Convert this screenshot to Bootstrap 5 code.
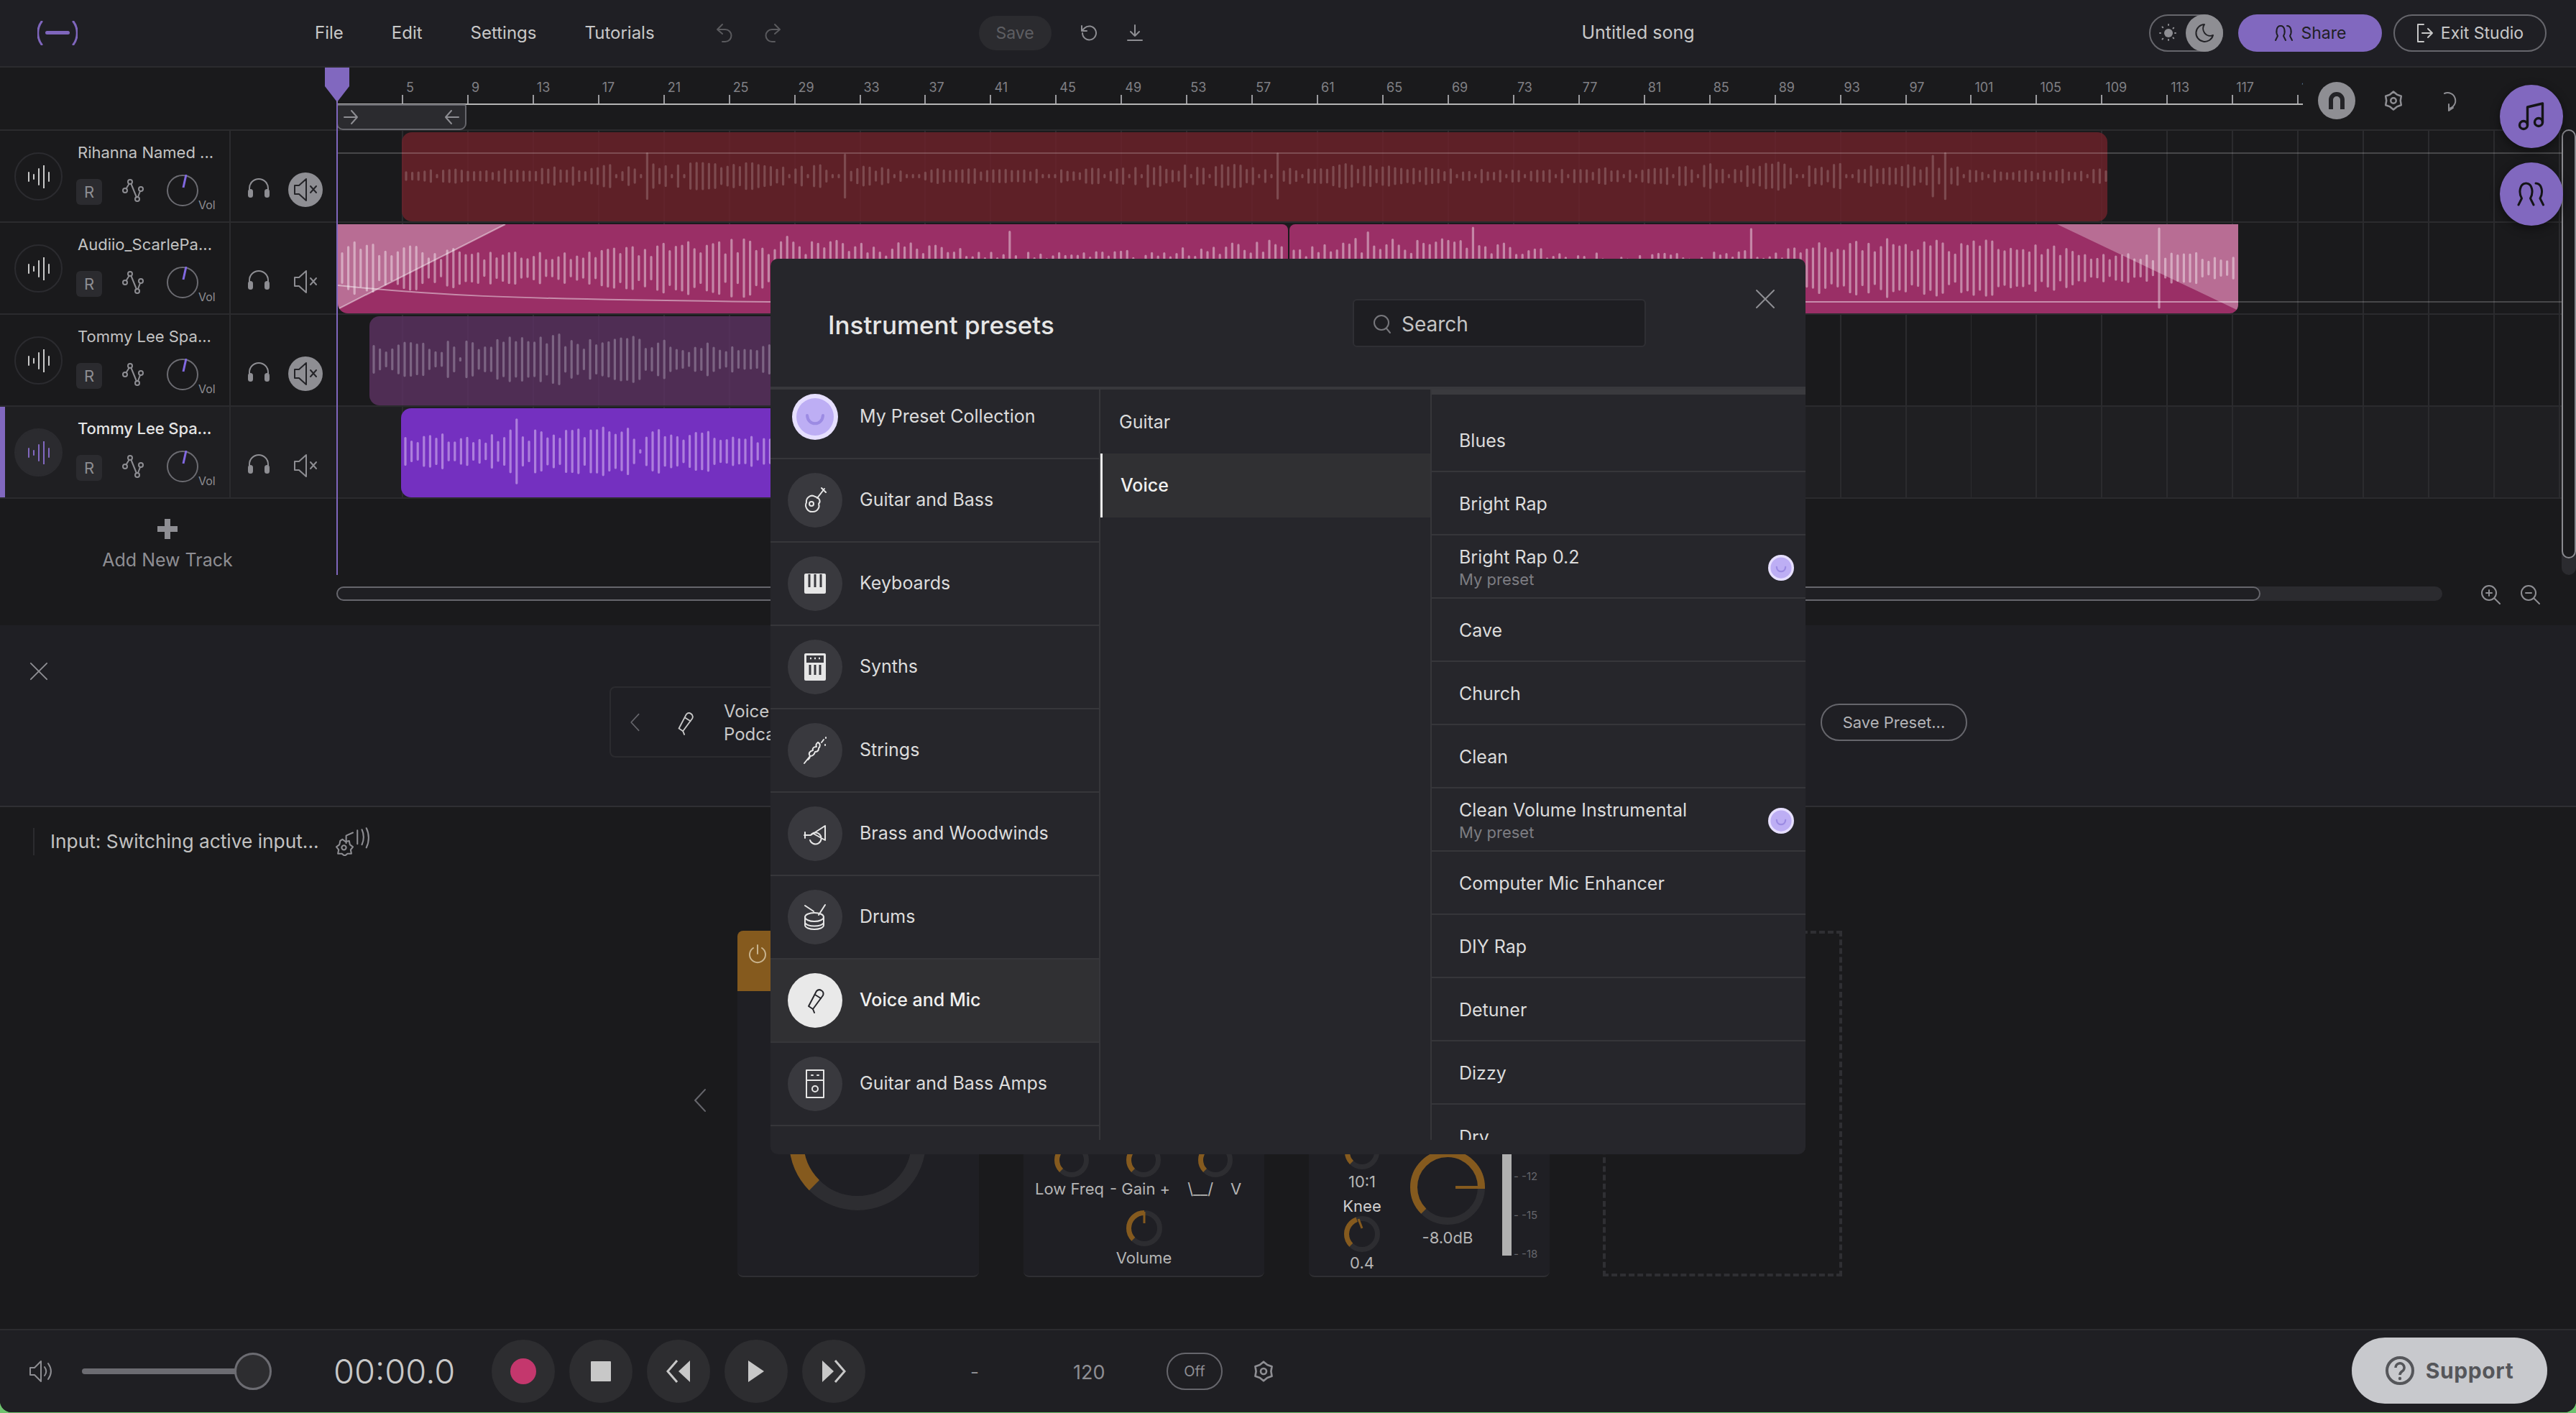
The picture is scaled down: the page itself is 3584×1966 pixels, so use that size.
<!DOCTYPE html>
<html lang="en">
<head>
<meta charset="UTF-8">
<title>Studio</title>
<link rel="stylesheet" href="https://cdn.jsdelivr.net/npm/bootstrap@5.3.0/dist/css/bootstrap.min.css">
<script src="https://cdn.jsdelivr.net/npm/bootstrap@5.3.0/dist/js/bootstrap.bundle.min.js"></script>
<style>
    html, body { margin: 0; width: 3584px; height: 1966px; overflow: hidden; background: #6fc36f; }
    body { font-family: Inter, "Noto Sans", sans-serif; color: #c8c8c8; }
    svg { display: block; flex: none; }
    .ln { fill: none; stroke: currentColor; stroke-width: 2; stroke-linecap: round; stroke-linejoin: round; }
    .svg-sprite { position: absolute; }

    .studio { width: 3584px; height: 1965px; position: relative; overflow: hidden; background: #1a1a1c; border-radius: 0 0 16px 16px; }

    /* top bar */
    .top-bar { height: 94px; background: #1f1f24; border-bottom: 2px solid #2b2b2e; padding: 0; flex-wrap: nowrap; justify-content: flex-start; }
    .bar-left { width: 1640px; }
    .logo-mark { margin-left: 52px; width: 56px; height: 34px; color: #7f66bd; }
    .menu-row { margin-left: 330px; gap: 67px; font-size: 24px; color: #c8c8c8; }
    .history-row { margin-left: 83px; gap: 39px; color: #5a5a5e; }
    .save-btn { margin-left: 273px; width: 101px; height: 48px; background: #2b2b2f; border: 0; border-radius: 24px; padding: 0; font-size: 23px; color: #5e5e62; }
    .bar-ic { color: #8e8e93; }
    .reload-ic { margin-left: 38px; }
    .download-ic { margin-left: 36px; }
    .song-title { flex: 0 0 1278px; text-align: center; font-size: 25px; color: #c8c8c8; }
    .bar-right { margin-left: 72px; }
    .theme-pill { width: 103px; height: 52px; border: 2px solid #66666c; border-radius: 26px; padding-left: 12px; color: #8e8e93; position: relative; }
    .theme-knob { position: absolute; right: -2px; top: -2px; width: 52px; height: 52px; border-radius: 50%; background: #8e8e93; color: #232327; display: flex; align-items: center; justify-content: center; }
    .share-btn, .exit-btn { height: 52px; border-radius: 26px; padding: 0; font-size: 23px; display: flex; align-items: center; justify-content: center; gap: 10px; }
    .share-btn { width: 200px; margin-left: 21px; background: #8168bf; border: 0; color: #1f1f24; }
    .exit-btn { width: 213px; margin-left: 16px; background: transparent; border: 2px solid #66666c; color: #c8c8c8; }

    /* ruler */
    .ruler-row { height: 86px; }
    .ruler-scale { margin-left: 468px; width: 2736px; height: 52px; overflow: hidden; border-bottom: 2px solid #b5b5b5; }
    .bar-cell { flex: 0 0 90.94px; height: 50px; padding: 17px 0 0 6px; font-size: 18px; line-height: 22px; color: #808085; background: linear-gradient(#9a9a9e, #9a9a9e) no-repeat left bottom / 2px 12px; }
    .ruler-tools { margin-left: 21px; margin-top: 20px; height: 52px; color: #8e8e93; }
    .gear-ic { margin: 0 48px 0 38px; }
    .magnet-chip { width: 52px; height: 52px; border-radius: 50%; background: #8e8e93; color: #232327; display: flex; align-items: center; justify-content: center; }
    .loop-box { position: absolute; left: 468px; top: 145px; width: 181px; height: 36px; background: #2b2b2f; border: 2px solid #66666c; border-radius: 3px 3px 9px 9px; padding: 0 6px; color: #8e8e93; display: flex; justify-content: space-between; align-items: center; }
    .head-mark { position: absolute; left: 452px; top: 94px; color: #8168bf; }
    .play-line { position: absolute; left: 468px; top: 142px; width: 2px; height: 658px; background: #7f66bd; z-index: 3; }

    /* tracks */
    .track-row { width: 3564px; height: 128px; border-top: 2px solid #2b2b2e; }
    .track-row.is-last { height: 130px; border-bottom: 2px solid #2b2b2e; }
    .track-row.is-active { background: #1f1f22; }
    .track-row.is-active .track-head { box-shadow: inset 7px 0 #8168bf; }
    .track-head { flex: 0 0 470px; }
    .track-info { flex: 0 0 321px; border-right: 2px solid #2b2b2e; padding: 30px 0 0 20px; }
    .wave-ring { width: 67px; height: 67px; border-radius: 50%; border: 2px solid #2b2b2f; color: #c8c8c8; display: flex; align-items: center; justify-content: center; margin-right: 21px; }
    .is-active .wave-ring { background: #2b2b2f; color: #8168bf; }
    .track-ctl { margin-top: -15px; width: 205px; }
    .track-name { font-size: 22px; line-height: 30px; color: #c2c2c2; white-space: nowrap; }
    .is-active .track-name { color: #e4e4e4; font-weight: 500; letter-spacing: -.1px; }
    .ctl-row { margin-top: 15px; height: 46px; margin-left: -2px; color: #8e8e93; }
    .rec-chip { width: 36px; height: 36px; background: #2b2b2f; border: 0; border-radius: 6px; padding: 0; font-size: 22px; color: #8e8e93; margin-top: 4px; }
    .node-ic { margin: 0 32px 0 28px; }
    .vol-tag { font-size: 16px; align-self: flex-end; line-height: 18px; color: #8e8e93; margin-bottom: -6px; }
    .track-side { padding: 58px 0 0 23px; color: #8e8e93; gap: 25px; }
    .mute-chip { width: 48px; height: 48px; border-radius: 50%; display: flex; align-items: center; justify-content: center; }
    .mute-chip.is-on { background: #8e8e93; color: #232327; }
    .track-lane { flex: 1 1 auto; position: relative; background: repeating-linear-gradient(90deg, transparent 0, transparent 88.94px, #2b2b2e 88.94px, #2b2b2e 90.94px); }
    .clip { position: absolute; top: 2px; height: 124px; border-radius: 14px; overflow: hidden; }
    .clip-red { left: 89px; width: 2373px; background: rgba(111, 34, 42, .8); }
    .clip-pink { background: #9a2f66; }
    .clip-pink.a { left: 0; width: 1322px; border-radius: 0 8px 8px 14px; }
    .clip-pink.b { left: 1324px; width: 1320px; border-radius: 8px 0 12px 8px; }
    .clip-dim { left: 44px; width: 1300px; background: rgba(92, 50, 99, .8); }
    .clip-live { left: 88px; width: 1300px; background: #7430c0; }
    .clip svg { position: absolute; left: 0; top: 0; }
    .gain-line { position: absolute; height: 2px; background: rgba(255, 255, 255, .2); }
    .gain-top { left: 0; top: 30px; width: 3095px; }
    .gain-tail { left: 2644px; top: 109px; width: 451px; }

    .add-zone { height: 176px; }
    .add-track { flex: 0 0 470px; height: 176px; padding: 28px 4px 0 0; color: #8e8e93; font-size: 25px; line-height: 34px; text-align: center; }
    .add-track svg { margin: 0 auto 12px; }
    .hscroll { margin-top: 122px; margin-left: -2px; width: 2930px; height: 20px; background: #2b2b2f; border-radius: 10px; }
    .hscroll-thumb { width: 2677px; height: 20px; background: #1f1f23; border: 2px solid #66666c; border-radius: 10px; }
    .zoom-row { margin: 119px 0 0 53px; gap: 27px; color: #8e8e93; }

    .vscroll { position: absolute; left: 3564px; top: 180px; width: 20px; height: 620px; background: #2b2b2f; border-radius: 10px; }
    .vscroll-thumb { height: 597px; background: #1a1a1c; border: 2px solid #8a8a8f; border-radius: 10px; }
    .float-btn { position: absolute; left: 3478px; width: 88px; height: 88px; border-radius: 50%; background: #8168bf; color: #141416; display: flex; align-items: center; justify-content: center; box-shadow: 0 4px 14px rgba(0, 0, 0, .45); z-index: 4; }
    .float-note { top: 118px; }
    .float-share { top: 226px; }

    /* effect header */
    .fx-head { height: 253px; background: #1f1f24; border-bottom: 2px solid #2f2f33; }
    .fx-close { margin: 51px 0 0 41px; color: #8e8e93; }
    .preset-box { margin: 85px 0 0 781px; width: 1500px; height: 99px; border: 2px solid #2b2b2f; border-radius: 8px; padding: 3px 0 0 24px; }
    .preset-chev { color: #66666c; margin: -3px 46px 0 0; }
    .preset-text { margin-left: 39px; font-size: 24px; line-height: 32px; color: #c8c8c8; }
    .save-preset { margin: 109px 0 0 185px; width: 204px; height: 52px; background: transparent; border: 2px solid #66666c; border-radius: 26px; padding: 0; font-size: 22px; color: #b4b4b8; }

    /* rack */
    .fx-rack { height: 726px; padding: 29px 0 0 46px; }
    .rack-status { height: 38px; border-left: 2px solid #2b2b2f; padding-left: 22px; font-size: 26.3px; color: #c2c2c2; gap: 22px; }
    .rack-row { margin: 105px 0 0 917px; gap: 62px; }
    .rack-chev { color: #66666c; margin: -10px -20px 0 0; align-self: center; }
    .fx-card { width: 336px; height: 482px; background: #1f1f24; border-bottom: 2px solid #2f2f33; border-radius: 8px; overflow: hidden; font-size: 22px; line-height: 26px; color: #b5b5b5; }
    .fx-card.is-mid { width: 335px; }
    .fx-card.is-comp { width: 335px; }
    .fx-band { height: 84px; background: #855a1e; padding: 18px 0 0 14px; color: #c9b48f; }
    .big-dial { margin: 115px 0 0 72px; }
    .dial-row { margin: 295px 0 0 43px; gap: 52px; }
    .dial-notes { margin: 3px 0 0 16px; white-space: nowrap; }
    .dial-vol { margin-top: 17px; }
    .note-gap { margin-top: 3px; }
    .comp-left { flex: 0 0 148px; padding-top: 284px; }
    .comp-left .gap-a { margin-top: 4px; }
    .comp-left .gap-b { margin-top: 8px; color: #d0d0d0; }
    .comp-left .gap-c { margin-top: 1px; }
    .comp-left .gap-d { margin-top: 2px; }
    .comp-mid { flex: 0 0 104px; margin-left: -7px; padding-top: 305px; }
    .comp-db { margin-top: 5px; }
    .comp-meter { margin: 205px 0 0 24px; }
    .dash-slot { width: 333px; height: 481px; border: 4px dashed #2f2f33; margin-left: 12px; }
    .meter-bar { width: 13px; height: 247px; background: #b0b0b0; }
    .meter-marks { margin-left: 3px; margin-top: 110px; font-size: 15px; line-height: 54px; color: #66666c; white-space: nowrap; }

    /* transport */
    .transport { height: 116px; background: #1f1f23; border-top: 2px solid #2b2b2e; color: #8e8e93; position: relative; padding-left: 40px; }
    .vol-slide { width: 264px; height: 52px; margin-left: 41px; position: relative; }
    .vol-slide::before { content: ""; position: absolute; left: 0; top: 22px; width: 230px; height: 8px; background: #6c6c72; border-radius: 4px; }
    .vol-thumb { position: absolute; right: 0; top: 0; width: 52px; height: 52px; border-radius: 50%; background: #2d2d30; border: 3px solid #6c6c72; }
    .clock { margin-left: 86px; width: 220px; font-size: 47px; font-weight: 300; color: #c8c8c8; line-height: 52px; }
    .deck { gap: 20px; }
    .deck-btn { width: 88px; height: 88px; border-radius: 50%; background: #2d2d30; border: 0; padding: 0; color: #c8c8c8; display: flex; align-items: center; justify-content: center; }
    .rec-dot { width: 36px; height: 36px; border-radius: 50%; background: #c4376d; }
    .stop-box { width: 28px; height: 28px; background: #c8c8c8; border-radius: 1px; }
    .beat-dash { margin-left: 146px; width: 143px; font-size: 26px; }
    .bpm-val { width: 130px; font-size: 27px; margin-top: 4px; }
    .off-pill { width: 78px; height: 52px; background: transparent; border: 2px solid #66666c; border-radius: 26px; padding: 0; font-size: 20px; color: #8e8e93; margin-right: 41px; }
    .help-btn { position: absolute; left: 3272px; top: 10px; width: 272px; height: 92px; border: 0; border-radius: 46px; background: #c8c9cd; color: #55565a; font-size: 30px; font-weight: 700; letter-spacing: .6px; display: flex; align-items: center; justify-content: center; gap: 16px; padding: 0; }

    /* preset dialog */
    .preset-modal { position: absolute; left: 1072px; top: 360px; width: 1440px; height: 1246px; background: #26262b; border-radius: 10px; z-index: 6; }
    .preset-top { height: 182px; border-bottom: 4px solid #38383c; position: relative; }
    .preset-title { position: absolute; left: 80px; top: 70px; font-size: 35px; line-height: 44px; font-weight: 500; color: #e6e6e6; }
    .search-box { position: absolute; left: 810px; top: 56px; width: 408px; height: 67px; background: #1e1e22; border: 2px solid #2f2f34; border-radius: 6px; padding: 2px 0 0 26px; gap: 14px; font-size: 28px; color: #c4c4c4; }
    .search-box svg { color: #77777c; }
    .preset-x { position: absolute; left: 1370px; top: 42px; color: #8e8e93; }
    .preset-cols { height: 1044px; overflow: hidden; }
    .col-cats { flex: 0 0 459px; border-right: 2px solid #36363a; }
    .col-kinds { flex: 0 0 459px; }
    .col-names { flex: 1 1 auto; border-left: 2px solid #36363a; }
    .preset-modal .list-group-item { background: transparent; color: #dcdcdc; border-width: 0 0 2px; border-color: #36363a; border-radius: 0; padding: 0; font-size: 25px; display: flex; align-items: center; }
    .cat-list { margin-top: -19px; }
    .cat-list .list-group-item { height: 116px; padding-left: 24px; gap: 24px; }
    .cat-list .list-group-item.is-sel { background: #303033; color: #f0f0f0; font-weight: 500; }
    .cat-chip { width: 76px; height: 76px; border-radius: 50%; background: #39393e; color: #e6e6e6; display: flex; align-items: center; justify-content: center; flex: none; }
    .cat-chip.is-mine { background: none; }
    .is-sel .cat-chip { background: #e9e9e9; color: #26262b; }
    .kind-list { margin-top: 2px; }
    .kind-list .list-group-item { height: 87px; padding-left: 26px; border-width: 0; }
    .kind-list .list-group-item.is-sel { height: 89px; background: #303033; border-left: 3px solid #eee; padding-left: 25px; color: #f0f0f0; font-weight: 500; }
    .name-cap { height: 7px; background: #3a3a3e; }
    .name-list .list-group-item { height: 88px; padding: 4px 0 0 38px; justify-content: space-between; }
    .name-list .list-group-item.is-first { margin-top: 20px; }
    .preset-sub { font-size: 22px; line-height: 30px; color: #7d7d82; }
    .preset-main { line-height: 32px; }
    .mine-badge { margin-right: 16px; }
</style>
</head>
<body>
<svg class="svg-sprite" width="0" height="0">
    <defs>
        <symbol id="i-bars" viewBox="0 0 32 32"><path class="ln" stroke-width="3" d="M2 10v12M9 13v6M16 5v22M23 0v32M30 10v12"/></symbol>
        <symbol id="i-node" viewBox="0 0 30 32"><g class="ln" stroke-width="2.6"><circle cx="11" cy="4" r="3"/><circle cx="4" cy="16" r="3"/><circle cx="26" cy="14" r="3"/><circle cx="21" cy="28" r="3"/><path d="M9.5 7 5.5 13.5M12.500 7 20 25.500M22 25 25 17"/></g></symbol>
        <symbol id="i-phones" viewBox="0 0 32 28"><path class="ln" stroke-width="3" d="M3 18v-4a13 13 0 0 1 26 0v4"/><rect x="1" y="15" width="7" height="12" rx="3.5" fill="currentColor"/><rect x="24" y="15" width="7" height="12" rx="3.5" fill="currentColor"/></symbol>
        <symbol id="i-mute" viewBox="0 0 34 36"><g class="ln" stroke-width="3"><path d="M2 12h6l10-9v30L8 24H2z"/><path d="M24 13l8 9M32 13l-8 9"/></g></symbol>
        <symbol id="i-share" viewBox="0 0 28 24"><g class="ln" stroke-width="2.2"><path d="M2 22l3-6C2 11 3 2 9 2s7 9 4 14l3 6"/><path d="M18 2c6 0 7 9 4 14l3 6"/></g></symbol>
        <symbol id="i-gear" viewBox="0 0 24 24"><g class="ln"><path d="M12 2 15.9 5.25 20.66 7 19.8 12 20.66 17 15.9 18.75 12 22 8.1 18.75 3.34 17 4.2 12 3.34 7 8.1 5.25z"/><circle cx="12" cy="12" r="3"/></g></symbol>
        <symbol id="i-mic" viewBox="0 0 32 36"><g class="ln" stroke-width="2.8"><path d="M18 5a5.500 5.500 0 0 1 9 6L13 30l-6-4z"/><path d="M16 10l8 5M13 30l2 5"/></g></symbol>
        <symbol id="i-x" viewBox="0 0 28 28"><path class="ln" d="M2 2l24 24M26 2 2 26"/></symbol>
        <symbol id="i-chev" viewBox="0 0 18 32"><path class="ln" stroke-width="2.4" d="M16 2 3 16l13 14"/></symbol>
        <symbol id="i-smile" viewBox="0 0 64 64"><circle cx="32" cy="32" r="32" fill="#e6dfff"/><circle cx="32" cy="32" r="26" fill="#bdaef4"/><path d="M21 30c1 15 21 15 22 0" fill="none" stroke="#9c8be3" stroke-width="4" stroke-linecap="round"/></symbol>
    </defs>
</svg>

<div class="studio">
    <nav class="navbar top-bar">
        <div class="bar-left d-flex align-items-center">
            <svg class="logo-mark" viewBox="0 0 56 34"><path d="M6 1C-1 10-1 24 6 33M50 1c7 9 7 23 0 32" fill="none" stroke="currentColor" stroke-width="3" stroke-linecap="round"/><rect x="11" y="14" width="34" height="5" rx="2.5" fill="currentColor"/></svg>
            <div class="menu-row d-flex">
                <span>File</span><span>Edit</span><span>Settings</span><span>Tutorials</span>
            </div>
            <div class="history-row d-flex">
                <svg width="28" height="28" viewBox="0 0 28 28"><path class="ln" d="M11 2 4 9l7 6M4 9h11a8 8 0 0 1 0 17h-4"/></svg>
                <svg width="28" height="28" viewBox="0 0 28 28"><path class="ln" d="M17 2l7 7-7 6M24 9H13a8 8 0 0 0 0 17h4"/></svg>
            </div>
            <button class="btn save-btn">Save</button>
            <svg class="bar-ic reload-ic" width="28" height="28" viewBox="0 0 28 28"><path class="ln" d="M5 14a9.5 9.5 0 1 0 3-7l-4 4M4 4v7h7"/></svg>
            <svg class="bar-ic download-ic" width="28" height="28" viewBox="0 0 28 28"><path class="ln" d="M14 3v15M8 12l6 6 6-6M4 24h20"/></svg>
        </div>
        <div class="song-title">Untitled song</div>
        <div class="bar-right d-flex align-items-center">
            <div class="theme-pill d-flex align-items-center">
                <svg width="26" height="26" viewBox="0 0 26 26"><circle cx="13" cy="13" r="6" fill="currentColor"/><path class="ln" stroke-dasharray="1 5" d="M13 1v3M13 22v3M1 13h3M22 13h3M4.5 4.5l2 2M19.5 19.5l2 2M4.5 21.5l2-2M19.5 6.5l2-2"/></svg>
                <span class="theme-knob"><svg width="30" height="30" viewBox="0 0 30 30"><path class="ln" stroke-width="2.4" d="M15 3a12 12 0 1 0 12 15A10 10 0 0 1 15 3z"/></svg></span>
            </div>
            <button class="btn share-btn"><svg width="28" height="24"><use href="#i-share"/></svg>Share</button>
            <button class="btn exit-btn"><svg width="24" height="30" viewBox="0 0 24 30"><path class="ln" d="M10 3H2v24h8M8 15h14M16 9l6 6-6 6"/></svg>Exit Studio</button>
        </div>
    </nav>

    <div class="ruler-row d-flex">
        <div class="ruler-scale d-flex" id="rulerScale"></div>
        <div class="ruler-tools d-flex align-items-center">
            <span class="magnet-chip"><svg width="26" height="28" viewBox="0 0 26 28"><path d="M2 26V13a11 11 0 0 1 22 0v13h-6V13a5 5 0 0 0-10 0v13z" fill="currentColor"/></svg></span>
            <svg class="gear-ic" width="30" height="32"><use href="#i-gear"/></svg>
            <svg width="28" height="32" viewBox="0 0 28 32"><path class="ln" d="M8 6a11 11 0 1 1 6 21M14 21v9l6-4"/></svg>
        </div>
    </div>
    <div class="loop-box">
        <svg width="24" height="24" viewBox="0 0 24 24"><path class="ln" d="M3 12h18M13 3l8 9-8 9"/></svg>
        <svg width="24" height="24" viewBox="0 0 24 24"><path class="ln" d="M21 12H3M11 3l-8 9 8 9"/></svg>
    </div>
    <svg class="head-mark" width="34" height="48" viewBox="0 0 34 48"><path d="M0 0h34v26L17 48 0 26z" fill="currentColor"/></svg>
    <div class="play-line"></div>

    <div class="track-row d-flex">
        <div class="track-head d-flex">
            <div class="track-info d-flex">
                <span class="wave-ring"><svg width="32" height="32"><use href="#i-bars"/></svg></span>
                <div class="track-ctl">
                    <div class="track-name">Rihanna Named ...</div>
                    <div class="ctl-row d-flex align-items-center">
                        <button class="btn rec-chip">R</button>
                        <svg class="node-ic" width="30" height="32"><use href="#i-node"/></svg>
                        <svg width="44" height="44" viewBox="0 0 44 44"><circle cx="22" cy="22" r="21" fill="none" stroke="#6c6c72" stroke-width="2"/><path d="M27 0 23 18" stroke="#8168e0" stroke-width="3"/></svg>
                        <span class="vol-tag">Vol</span>
                    </div>
                </div>
            </div>
            <div class="track-side d-flex">
                <svg width="32" height="28" class="mt-2"><use href="#i-phones"/></svg>
                <span class="mute-chip is-on"><svg width="34" height="36"><use href="#i-mute"/></svg></span>
            </div>
        </div>
        <div class="track-lane">
            <div class="clip clip-red" data-wave="red"></div>
            <div class="gain-line gain-top"></div>
        </div>
    </div>

    <div class="track-row d-flex">
        <div class="track-head d-flex">
            <div class="track-info d-flex">
                <span class="wave-ring"><svg width="32" height="32"><use href="#i-bars"/></svg></span>
                <div class="track-ctl">
                    <div class="track-name">Audiio_ScarlePa...</div>
                    <div class="ctl-row d-flex align-items-center">
                        <button class="btn rec-chip">R</button>
                        <svg class="node-ic" width="30" height="32"><use href="#i-node"/></svg>
                        <svg width="44" height="44" viewBox="0 0 44 44"><circle cx="22" cy="22" r="21" fill="none" stroke="#6c6c72" stroke-width="2"/><path d="M27 0 23 18" stroke="#8168e0" stroke-width="3"/></svg>
                        <span class="vol-tag">Vol</span>
                    </div>
                </div>
            </div>
            <div class="track-side d-flex">
                <svg width="32" height="28" class="mt-2"><use href="#i-phones"/></svg>
                <span class="mute-chip"><svg width="34" height="36"><use href="#i-mute"/></svg></span>
            </div>
        </div>
        <div class="track-lane">
            <div class="clip clip-pink a" data-wave="pinkA"></div>
            <div class="clip clip-pink b" data-wave="pinkB"></div>
            <div class="gain-line gain-tail"></div>
        </div>
    </div>

    <div class="track-row d-flex">
        <div class="track-head d-flex">
            <div class="track-info d-flex">
                <span class="wave-ring"><svg width="32" height="32"><use href="#i-bars"/></svg></span>
                <div class="track-ctl">
                    <div class="track-name">Tommy Lee Spa...</div>
                    <div class="ctl-row d-flex align-items-center">
                        <button class="btn rec-chip">R</button>
                        <svg class="node-ic" width="30" height="32"><use href="#i-node"/></svg>
                        <svg width="44" height="44" viewBox="0 0 44 44"><circle cx="22" cy="22" r="21" fill="none" stroke="#6c6c72" stroke-width="2"/><path d="M27 0 23 18" stroke="#8168e0" stroke-width="3"/></svg>
                        <span class="vol-tag">Vol</span>
                    </div>
                </div>
            </div>
            <div class="track-side d-flex">
                <svg width="32" height="28" class="mt-2"><use href="#i-phones"/></svg>
                <span class="mute-chip is-on"><svg width="34" height="36"><use href="#i-mute"/></svg></span>
            </div>
        </div>
        <div class="track-lane">
            <div class="clip clip-dim" data-wave="dim"></div>
        </div>
    </div>

    <div class="track-row is-active is-last d-flex">
        <div class="track-head d-flex">
            <div class="track-info d-flex">
                <span class="wave-ring"><svg width="32" height="32"><use href="#i-bars"/></svg></span>
                <div class="track-ctl">
                    <div class="track-name">Tommy Lee Spa...</div>
                    <div class="ctl-row d-flex align-items-center">
                        <button class="btn rec-chip">R</button>
                        <svg class="node-ic" width="30" height="32"><use href="#i-node"/></svg>
                        <svg width="44" height="44" viewBox="0 0 44 44"><circle cx="22" cy="22" r="21" fill="none" stroke="#6c6c72" stroke-width="2"/><path d="M27 0 23 18" stroke="#8168e0" stroke-width="3"/></svg>
                        <span class="vol-tag">Vol</span>
                    </div>
                </div>
            </div>
            <div class="track-side d-flex">
                <svg width="32" height="28" class="mt-2"><use href="#i-phones"/></svg>
                <span class="mute-chip"><svg width="34" height="36"><use href="#i-mute"/></svg></span>
            </div>
        </div>
        <div class="track-lane">
            <div class="clip clip-live" data-wave="live"></div>
        </div>
    </div>

    <div class="add-zone d-flex">
        <div class="add-track">
            <svg width="28" height="28" viewBox="0 0 28 28"><path d="M10 0h8v10h10v8H18v10h-8V18H0v-8h10z" fill="currentColor"/></svg>
            Add New Track
        </div>
        <div class="hscroll"><div class="hscroll-thumb"></div></div>
        <div class="zoom-row d-flex">
            <svg width="28" height="28" viewBox="0 0 28 28"><g class="ln"><circle cx="12" cy="12" r="10"/><path d="M20 20l7 7M12 8v8M8 12h8"/></g></svg>
            <svg width="28" height="28" viewBox="0 0 28 28"><g class="ln"><circle cx="12" cy="12" r="10"/><path d="M20 20l7 7M8 12h8"/></g></svg>
        </div>
    </div>

    <div class="vscroll"><div class="vscroll-thumb"></div></div>
    <span class="float-btn float-note"><svg width="38" height="40" viewBox="0 0 38 40"><g fill="none" stroke="currentColor" stroke-width="3.4" stroke-linecap="round" stroke-linejoin="round"><circle cx="8" cy="32" r="5.5"/><circle cx="29" cy="28" r="5.5"/><path d="M13.5 32V7L34.5 2v26"/></g></svg></span>
    <span class="float-btn float-share"><svg width="42" height="36"><use href="#i-share"/></svg></span>

    <section class="fx-head d-flex">
        <svg class="fx-close" width="26" height="26"><use href="#i-x"/></svg>
        <div class="preset-box d-flex align-items-center">
            <svg class="preset-chev" width="18" height="26"><use href="#i-chev"/></svg>
            <svg width="30" height="34"><use href="#i-mic"/></svg>
            <div class="preset-text"><div>Voice</div><div>Podcast</div></div>
        </div>
        <button class="btn save-preset">Save Preset...</button>
    </section>

    <section class="fx-rack">
        <div class="rack-status d-flex align-items-center">
            <span>Input: Switching active input...</span>
            <svg class="bar-ic" width="50" height="40" viewBox="0 0 48 38"><g class="ln"><path d="M24 7l-9 4v10M30 4v18M36 3c3 6 3 14 0 20M42 1c4 8 4 18 0 26"/><path d="M10 16l4 3 5-1 1 5 4 3-3 4 1 5-5 0-4 3-4-3-5 0 1-5-3-4 4-3 1-5z"/><circle cx="12" cy="27" r="3"/></g></svg>
        </div>
        <div class="rack-row d-flex">
            <svg class="rack-chev" width="21" height="34"><use href="#i-chev"/></svg>
            <div class="fx-card">
                <div class="fx-band"><svg width="28" height="30" viewBox="0 0 28 30"><path class="ln" d="M14 2v12M8 6a11 11 0 1 0 12 0"/></svg></div>
                <svg class="big-dial" width="190" height="190" viewBox="0 0 190 190"><circle cx="95" cy="95" r="85" fill="none" stroke="#2d2d31" stroke-width="20"/><circle cx="95" cy="95" r="85" fill="none" stroke="#855a1e" stroke-width="20" pathLength="360" stroke-dasharray="180 360" transform="rotate(135 95 95)"/></svg>
            </div>
            <div class="fx-card is-mid">
                <div class="dial-row d-flex">
                    <svg width="48" height="48" viewBox="0 0 48 48"><circle cx="24" cy="24" r="20.5" fill="none" stroke="#2d2d31" stroke-width="7"/><circle cx="24" cy="24" r="20.5" fill="none" stroke="#855a1e" stroke-width="7" pathLength="360" stroke-dasharray="135 360" transform="rotate(135 24 24)"/></svg>
                    <svg width="48" height="48" viewBox="0 0 48 48"><circle cx="24" cy="24" r="20.5" fill="none" stroke="#2d2d31" stroke-width="7"/><circle cx="24" cy="24" r="20.5" fill="none" stroke="#855a1e" stroke-width="7" pathLength="360" stroke-dasharray="135 360" transform="rotate(135 24 24)"/></svg>
                    <svg width="48" height="48" viewBox="0 0 48 48"><circle cx="24" cy="24" r="20.5" fill="none" stroke="#2d2d31" stroke-width="7"/><circle cx="24" cy="24" r="20.5" fill="none" stroke="#855a1e" stroke-width="7" pathLength="360" stroke-dasharray="135 360" transform="rotate(135 24 24)"/></svg>
                </div>
                <div class="dial-notes d-flex">
                    <span>Low Freq</span><span class="ms-2">- Gain +</span><span class="ms-4">\__/</span><span class="ms-4">V</span>
                </div>
                <div class="dial-vol text-center">
                    <svg class="mx-auto" width="50" height="50" viewBox="0 0 50 50"><circle cx="25" cy="25" r="21.5" fill="none" stroke="#2d2d31" stroke-width="7"/><circle cx="25" cy="25" r="21.5" fill="none" stroke="#855a1e" stroke-width="7" pathLength="360" stroke-dasharray="135 360" transform="rotate(135 25 25)"/><path d="M25 2v16" stroke="#855a1e" stroke-width="3"/></svg>
                    <div class="note-gap">Volume</div>
                </div>
            </div>
            <div class="fx-card is-comp d-flex">
                <div class="comp-left text-center">
                    <svg class="mx-auto" width="48" height="48" viewBox="0 0 48 48"><circle cx="24" cy="24" r="20.5" fill="none" stroke="#2d2d31" stroke-width="7"/><circle cx="24" cy="24" r="20.5" fill="none" stroke="#855a1e" stroke-width="7" pathLength="360" stroke-dasharray="135 360" transform="rotate(135 24 24)"/></svg>
                    <div class="gap-a">10:1</div>
                    <div class="gap-b">Knee</div>
                    <svg class="mx-auto gap-c" width="50" height="50" viewBox="0 0 50 50"><circle cx="25" cy="25" r="21.5" fill="none" stroke="#2d2d31" stroke-width="7"/><circle cx="25" cy="25" r="21.5" fill="none" stroke="#855a1e" stroke-width="7" pathLength="360" stroke-dasharray="115 360" transform="rotate(135 25 25)"/><path d="M20 4l5 13" stroke="#855a1e" stroke-width="3"/></svg>
                    <div class="gap-d">0.4</div>
                </div>
                <div class="comp-mid text-center">
                    <svg width="104" height="104" viewBox="0 0 104 104"><circle cx="52" cy="52" r="47" fill="none" stroke="#2d2d31" stroke-width="10"/><circle cx="52" cy="52" r="47" fill="none" stroke="#855a1e" stroke-width="10" pathLength="360" stroke-dasharray="225 360" transform="rotate(135 52 52)"/><path d="M63 52h41" stroke="#855a1e" stroke-width="4"/></svg>
                    <div class="comp-db">-8.0dB</div>
                </div>
                <div class="comp-meter d-flex">
                    <div class="meter-bar"></div>
                    <div class="meter-marks"><div>- -12</div><div>- -15</div><div>- -18</div></div>
                </div>
            </div>
            <div class="dash-slot"></div>
        </div>
    </section>

    <footer class="transport d-flex align-items-center">
        <svg width="33" height="32" viewBox="0 0 33 32"><g class="ln"><path d="M2 11h6l9-9v28l-9-9H2z"/><path d="M22 10c3 4 3 8 0 12M27 5c5 7 5 15 0 22"/></g></svg>
        <div class="vol-slide"><span class="vol-thumb"></span></div>
        <div class="clock">00:00.0</div>
        <div class="deck d-flex">
            <button class="btn deck-btn"><span class="rec-dot"></span></button>
            <button class="btn deck-btn"><span class="stop-box"></span></button>
            <button class="btn deck-btn"><svg width="34" height="32" viewBox="0 0 34 32"><path d="M33 1v30L17 16z" fill="currentColor"/><path d="M15 1 2 16l13 15" fill="none" stroke="currentColor" stroke-width="3"/></svg></button>
            <button class="btn deck-btn"><svg width="26" height="32" viewBox="0 0 26 32"><path d="M2 1v30l22-15z" fill="currentColor"/></svg></button>
            <button class="btn deck-btn"><svg width="34" height="32" viewBox="0 0 34 32"><path d="M1 1v30l16-15z" fill="currentColor"/><path d="M19 1l13 15-13 15" fill="none" stroke="currentColor" stroke-width="3"/></svg></button>
        </div>
        <div class="beat-dash">-</div>
        <div class="bpm-val">120</div>
        <button class="btn off-pill">Off</button>
        <svg width="32" height="34"><use href="#i-gear"/></svg>
        <button class="btn help-btn"><svg width="40" height="40" viewBox="0 0 40 40"><circle cx="20" cy="20" r="18" fill="none" stroke="currentColor" stroke-width="4"/><path d="M14 16a6 6 0 1 1 9 5c-2 1.500-3 2.500-3 5" fill="none" stroke="currentColor" stroke-width="3.600"/><circle cx="20" cy="31" r="2.200" fill="currentColor"/></svg>Support</button>
    </footer>

    <div class="preset-modal">
        <div class="preset-top">
            <div class="preset-title">Instrument presets</div>
            <div class="search-box d-flex align-items-center">
                <svg width="26" height="28" viewBox="0 0 26 28"><g class="ln" stroke-width="2.6"><circle cx="12" cy="12" r="10"/><path d="M19 20l5 6"/></g></svg>
                <span>Search</span>
            </div>
            <svg class="preset-x" width="28" height="28"><use href="#i-x"/></svg>
        </div>
        <div class="preset-cols d-flex">
            <div class="col-cats">
                <div class="list-group list-group-flush cat-list">
                    <div class="list-group-item"><span class="cat-chip is-mine"><svg width="64" height="64"><use href="#i-smile"/></svg></span>My Preset Collection</div>
                    <div class="list-group-item"><span class="cat-chip"><svg width="34" height="38" viewBox="0 0 34 38"><g class="ln" stroke-width="2.8"><path d="M17 14c-6-4-13 2-12 8-3 6 2 14 9 13 6 0 10-6 8-11 3-3 2-8-5-10z"/><circle cx="12" cy="24" r="3"/><path d="M20 16 30 3M26 2l2 2M30 6l2 2"/></g></svg></span>Guitar and Bass</div>
                    <div class="list-group-item"><span class="cat-chip"><svg width="32" height="30" viewBox="0 0 32 30"><rect x="1" y="1" width="30" height="28" rx="2" fill="currentColor"/><path d="M8 2v18M16 2v18M24 2v18" stroke="#39393e" stroke-width="3"/></svg></span>Keyboards</div>
                    <div class="list-group-item"><span class="cat-chip"><svg width="32" height="40" viewBox="0 0 32 40"><rect x="1" y="1" width="30" height="38" rx="2" fill="currentColor"/><rect x="4" y="4" width="24" height="10" fill="#39393e"/><path d="M9 8h2M15 8h2M21 8h2" stroke="currentColor" stroke-width="2.500"/><path d="M9 17v14M16 17v14M23 17v14" stroke="#39393e" stroke-width="3"/></svg></span>Synths</div>
                    <div class="list-group-item"><span class="cat-chip"><svg width="34" height="40" viewBox="0 0 34 40"><g class="ln" stroke-width="3"><path d="M21 9c-3 2-3 4-2 6-4 0-6 2-5 5-4 1-7 4-4 8 0 3-2 4-3 5"/><path d="M21 9c4 2 3 6 1 8 0 4-3 5-5 5-1 4-3 6-7 6"/><path d="M2 38l8-10M26 9l3-4M32 2v1M31 12v1"/></g></svg></span>Strings</div>
                    <div class="list-group-item"><span class="cat-chip"><svg width="34" height="32" viewBox="0 0 34 32"><g class="ln" stroke-width="3"><path d="M2 18h9a8 8 0 1 1-1 7M3 14v8M11 18 31 5v20L15 16"/></g></svg></span>Brass and Woodwinds</div>
                    <div class="list-group-item"><span class="cat-chip"><svg width="32" height="38" viewBox="0 0 32 38"><g class="ln" stroke-width="3"><ellipse cx="15" cy="19" rx="13" ry="6"/><path d="M2 19v11c0 8 26 8 26 0V19M2 3l12 8M30 2l-9 14M2 27c4 6 22 6 26 0"/></g></svg></span>Drums</div>
                    <div class="list-group-item is-sel"><span class="cat-chip"><svg width="32" height="36"><use href="#i-mic"/></svg></span>Voice and Mic</div>
                    <div class="list-group-item"><span class="cat-chip"><svg width="28" height="42" viewBox="0 0 28 42"><g class="ln" stroke-width="3"><rect x="2" y="2" width="24" height="38"/><path d="M2 16h24M9 9h2M17 9h2"/><circle cx="14" cy="28" r="4"/></g></svg></span>Guitar and Bass Amps</div>
                    <div class="list-group-item"></div>
                </div>
            </div>
            <div class="col-kinds">
                <div class="list-group list-group-flush kind-list">
                    <div class="list-group-item">Guitar</div>
                    <div class="list-group-item is-sel">Voice</div>
                </div>
            </div>
            <div class="col-names">
                <div class="name-cap"></div>
                <div class="list-group list-group-flush name-list">
                    <div class="list-group-item is-first">Blues</div>
                    <div class="list-group-item">Bright Rap</div>
                    <div class="list-group-item"><div><div class="preset-main">Bright Rap 0.2</div><div class="preset-sub">My preset</div></div><svg class="mine-badge" width="36" height="36"><use href="#i-smile"/></svg></div>
                    <div class="list-group-item">Cave</div>
                    <div class="list-group-item">Church</div>
                    <div class="list-group-item">Clean</div>
                    <div class="list-group-item"><div><div class="preset-main">Clean Volume Instrumental</div><div class="preset-sub">My preset</div></div><svg class="mine-badge" width="36" height="36"><use href="#i-smile"/></svg></div>
                    <div class="list-group-item">Computer Mic Enhancer</div>
                    <div class="list-group-item">DIY Rap</div>
                    <div class="list-group-item">Detuner</div>
                    <div class="list-group-item">Dizzy</div>
                    <div class="list-group-item">Dry</div>
                </div>
            </div>
        </div>
    </div>
</div>

<script>
    // ruler labels, every 4 bars
    var scale = document.getElementById('rulerScale');
    for (var bar = 1; bar <= 121; bar += 4) {
        var cell = document.createElement('div');
        cell.className = 'bar-cell';
        cell.textContent = bar === 1 ? '' : bar;
        scale.appendChild(cell);
    }

    // fake waveforms, seeded so every render is the same
    var seed = 7;
    function rnd() { seed = (seed * 16807) % 2147483647; return seed / 2147483647; }

    var waves = {
        red:   { mid: 61, base: 20, peak: 32, rare: .012, quiet: .14, color: '#7d4a4f' },
        pinkA: { mid: 61, base: 50, peak: 56, rare: .015, quiet: 0, color: 'rgba(255,255,255,.42)' },
        pinkB: { mid: 61, base: 46, peak: 56, rare: .015, quiet: 0, color: 'rgba(255,255,255,.42)' },
        dim:   { mid: 60, base: 38, peak: 46, rare: .02, quiet: .05, color: '#7c6483' },
        live:  { mid: 60, base: 36, peak: 46, rare: .02, quiet: .05, color: '#ad7fdc' }
    };

    function fadeLayer(name, w) {
        if (name === 'pinkA') {
            return '<polygon points="0,0 233,0 0,118" fill="rgba(255,255,255,.3)"/>' +
                   '<path d="M233 0 0 118" stroke="rgba(255,255,255,.45)" stroke-width="2"/>' +
                   '<path d="M0 85C120 98 220 104 600 108H' + w + '" fill="none" stroke="rgba(255,255,255,.45)" stroke-width="2"/>';
        }
        if (name === 'pinkB') {
            return '<polygon points="1068,0 ' + w + ',0 ' + w + ',120" fill="rgba(255,255,255,.3)"/>' +
                   '<path d="M0 108H' + w + '" stroke="rgba(255,255,255,.45)" stroke-width="2"/>';
        }
        return '';
    }

    document.querySelectorAll('.clip').forEach(function (clip) {
        var name = clip.dataset.wave, cfg = waves[name], w = clip.offsetWidth, d = '', prev = cfg.base * .6;
        for (var x = 6; x < w - 2; x += 8.6) {
            var swell = .74 + .26 * Math.sin(x / 120 + w);
            var amp = cfg.base * swell * (.28 + .72 * rnd());
            amp = amp * .75 + prev * .25;
            prev = amp;
            if (rnd() < cfg.rare) amp = cfg.peak * (.82 + .18 * rnd());
            if (rnd() < cfg.quiet) amp = 1.5;
            d += 'M' + x.toFixed(1) + ' ' + (cfg.mid - amp).toFixed(1) + 'V' + (cfg.mid + amp).toFixed(1);
        }
        clip.innerHTML = '<svg width="' + w + '" height="124"><path d="' + d + '" fill="none" stroke="' + cfg.color +
            '" stroke-width="3.2" stroke-linecap="round"/>' + fadeLayer(name, w) + '</svg>';
    });
</script>
</body>
</html>
